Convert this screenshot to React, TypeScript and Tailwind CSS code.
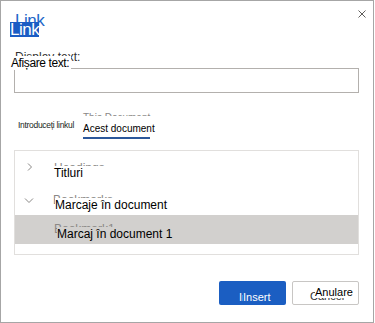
import React from "react";

function ChevronRight() {
  return (
    <svg width="10" height="10" viewBox="0 0 10 10" className="ml-[10px] mt-[11px]">
      <path d="M3 1.5 L6.5 5 L3 8.5" fill="none" stroke="#8a8886" strokeWidth="1" />
    </svg>
  );
}

function ChevronDown() {
  return (
    <svg width="10" height="10" viewBox="0 0 10 10" className="ml-[9px] mt-[13.5px]">
      <path d="M1 1.5 L5 5.5 L9 1.5" fill="none" stroke="#8a8886" strokeWidth="1" />
    </svg>
  );
}

export default function App() {
  return (
    <div className="h-[323px] w-[374px] border border-[#a6a6a6] bg-white font-['Liberation_Sans',Arial,sans-serif] text-[#201f1e]">
      {/* header */}
      <div className="flex h-[48.5px] items-start justify-between">
        <div className="relative ml-[14px] mt-[10px]">
          <span className="block text-[17px] leading-[20px] tracking-[-0.5px] text-[#2266c8]">Link</span>
          <span className="absolute left-[-5px] top-[10.7px] bg-[#1b5cc4] text-[17px] leading-[15px] tracking-[-0.5px] text-white">
            Link
          </span>
        </div>
        <button className="mr-[7px] mt-[9px]">
          <svg width="8" height="8" viewBox="0 0 8 8">
            <path d="M0.5 0.5 L7.5 7.5 M7.5 0.5 L0.5 7.5" stroke="#605e5c" strokeWidth="1" />
          </svg>
        </button>
      </div>

      {/* display text */}
      <div className="relative z-10 ml-[14px] w-fit">
        <span className="block whitespace-nowrap text-[12px] leading-[14px] text-[#323130]">Display text:</span>
        <span className="absolute left-[-4px] top-[6.5px] whitespace-nowrap bg-white pr-[2px] text-[12px] leading-[14px] tracking-[-0.4px] text-black">
          Afișare text:
        </span>
      </div>
      <div className="ml-[13px] mt-[4.5px] h-[25px] w-[345px] border border-[#b3b0ad] bg-white" />

      {/* tabs */}
      <div className="mt-[19.25px] flex items-start">
        <div className="ml-[17px] w-[65px] whitespace-nowrap pt-[7.5px] text-[8.5px] leading-[11px] tracking-[-0.3px] text-[#201f1e]">
          Introduceți linkul
        </div>
        <div className="relative">
          <div className="whitespace-nowrap border-b-2 border-[#2b579a] pb-[12.75px] text-[10px] leading-[12px] text-[#8a8886]">
            This Document
          </div>
          <div className="absolute left-0 top-[3.5px] whitespace-nowrap bg-white pt-[7px] text-[10px] leading-[12px] text-black">
            Acest document
          </div>
        </div>
      </div>

      {/* tree */}
      <div className="ml-[13px] mt-[11px] h-[105px] w-[345px] border border-[#e1dfdd]">
        <div className="flex h-[32px]">
          <div className="w-[39px] shrink-0">
            <ChevronRight />
          </div>
          <div className="relative flex-1 pt-[10px]">
            <span className="block whitespace-nowrap text-[12px] leading-[14px] text-[#8a8886]">Headings</span>
            <div className="absolute left-0 right-0 top-[14.5px] whitespace-nowrap bg-white pt-[1px] text-[12px] leading-[12px] text-black">
              Titluri
            </div>
          </div>
        </div>
        <div className="flex h-[32px]">
          <div className="w-[39px] shrink-0">
            <ChevronDown />
          </div>
          <div className="relative flex-1 pt-[10px]">
            <span className="ml-[-1px] block whitespace-nowrap text-[12px] leading-[14px] text-[#8a8886]">Bookmarks</span>
            <div className="absolute left-[1px] right-0 top-[15px] whitespace-nowrap bg-white pt-[0.5px] text-[12px] leading-[12px] text-black">
              Marcaje în document
            </div>
          </div>
        </div>
        <div className="flex h-[29px] bg-[#d2d0ce]">
          <div className="w-[39px] shrink-0" />
          <div className="relative flex-1 pt-[7.4px]">
            <span className="block whitespace-nowrap text-[12px] leading-[14px] text-[#8a8886]">Bookmark1</span>
            <div className="absolute left-[3px] right-0 top-[12.4px] whitespace-nowrap bg-[#d2d0ce] pt-[1px] text-[12px] leading-[12px] text-black">
              Marcaj în document 1
            </div>
          </div>
        </div>
      </div>

      {/* buttons */}
      <div className="mt-[26px] flex justify-end gap-[6px] pr-[14px]">
        <button className="h-[24px] w-[67px] rounded-[2px] bg-[#1b5ec2] pl-[20px] pt-[8px] text-left">
          <span className="relative block whitespace-nowrap text-[11px] leading-[11px] text-white">
            Insert
            <span className="absolute left-[4px] top-0 bg-[#1b5ec2] pr-[2px]">Insert</span>
          </span>
        </button>
        <button className="h-[24px] w-[67px] rounded-[2px] border border-[#c8c6c4] bg-white pl-[17px] pt-[6.6px] text-left">
          <span className="relative block whitespace-nowrap text-[11px] leading-[11px] text-[#323130]">
            Cancel
            <span className="absolute left-[5px] top-[-4px] bg-white text-black">Anulare</span>
          </span>
        </button>
      </div>
    </div>
  );
}
